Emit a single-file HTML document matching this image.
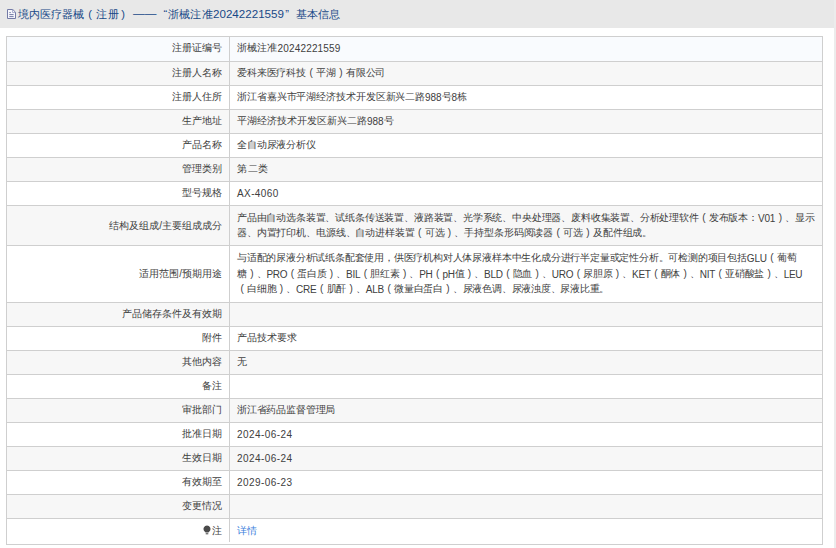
<!DOCTYPE html>
<html><head><meta charset="utf-8">
<style>
html,body{margin:0;padding:0;}
body{width:836px;height:548px;position:relative;overflow:hidden;background:#fff;font-family:"Liberation Sans",sans-serif;}
#hdr{position:absolute;left:0;top:0;width:834px;height:28px;background:#e8e8e8;}
#rstrip{position:absolute;left:834px;top:0;width:2px;height:548px;background:#ececec;}
.t{position:absolute;top:6px;font-size:11px;line-height:16px;color:#184887;white-space:nowrap;}
#ico{position:absolute;left:7px;top:9px;}
.row{position:absolute;left:6px;width:817px;}
.hl{position:absolute;left:6px;width:817px;height:1px;background:#cfcfcf;}
#vl{position:absolute;left:6px;top:36px;width:1px;height:509px;background:#cfcfcf;}
#vr{position:absolute;left:822px;top:36px;width:1px;height:509px;background:#cfcfcf;}
#vc{position:absolute;left:229px;top:36px;width:1px;height:506px;background:#cfcfcf;}
.lab{position:absolute;right:614px;font-size:10px;line-height:16px;color:#404040;white-space:nowrap;}
.val{position:absolute;left:237px;font-size:10px;line-height:16px;color:#404040;white-space:nowrap;}
.link{color:#3a80dc;}
i{font-style:normal;display:inline-block;width:10px;text-align:center;}
b.a{font-weight:normal;position:relative;top:1px;}
.bulb{vertical-align:-1px;margin-right:1px;}
</style></head><body>
<div id="hdr"></div>
<div id="rstrip"></div>
<svg id="ico" width="10" height="11" viewBox="0 0 10 11"><path d="M0.5 0.5H5.8L8.5 3.2V9.5H0.5Z" fill="#f6f6fb" stroke="#737aa6" stroke-width="1" stroke-linejoin="round"/><path d="M5.5 0.8V3.5H8.3" fill="none" stroke="#9aa0c4" stroke-width="0.8"/><path d="M2.3 3.6H3.8M2.3 5.6H6.6M2.3 7.6H6.6" stroke="#737aa6" stroke-width="1"/></svg>
<div class="t" id="h0" style="left:17.5px;letter-spacing:0.1px">境内医疗器械</div>
<div class="t" id="h1" style="left:85px;width:10px;text-align:center;font-size:11px">(</div>
<div class="t" id="h2" style="left:95.5px;letter-spacing:1px">注册</div>
<div class="t" id="h3" style="left:118px;width:10px;text-align:center;font-size:11px">)</div>
<div class="t" id="h4" style="left:133px;font-size:11.7px;top:5px">——</div>
<div class="t" id="h5" style="left:163.5px">“</div>
<div class="t" id="h6" style="left:167.5px;letter-spacing:0.4px">浙械注准</div>
<div class="t" id="h7" style="left:213px;font-size:11.6px">20242221559</div>
<div class="t" id="h8" style="left:285.3px">”</div>
<div class="t" id="h9" style="left:295.6px;letter-spacing:0.25px">基本信息</div>
<div class="row" style="top:36px;height:25px;background:#f9fbfe"></div>
<div class="hl" style="top:36px"></div>
<div class="lab" style="top:40.2px">注册证编号</div>
<div id="L0" class="val" style="top:40.2px;letter-spacing:0.150px">浙械注准<b class="a">20242221559</b></div>
<div class="row" style="top:61px;height:24px;background:#f7f7f7"></div>
<div class="hl" style="top:61px"></div>
<div class="lab" style="top:64.5px">注册人名称</div>
<div id="L1" class="val" style="top:64.5px;letter-spacing:-0.136px">爱科来医疗科技<i class="pl">(</i>平湖<i class="pr">)</i>有限公司</div>
<div class="row" style="top:85px;height:24px;background:#fff"></div>
<div class="hl" style="top:85px"></div>
<div class="lab" style="top:88.5px">注册人住所</div>
<div id="L2" class="val" style="top:88.5px;letter-spacing:-0.100px">浙江省嘉兴市平湖经济技术开发区新兴二路<b class="a">988</b>号<b class="a">8</b>栋</div>
<div class="row" style="top:109px;height:24px;background:#f7f7f7"></div>
<div class="hl" style="top:109px"></div>
<div class="lab" style="top:112.5px">生产地址</div>
<div id="L3" class="val" style="top:112.5px">平湖经济技术开发区新兴二路<b class="a">988</b>号</div>
<div class="row" style="top:133px;height:24px;background:#fff"></div>
<div class="hl" style="top:133px"></div>
<div class="lab" style="top:136.5px">产品名称</div>
<div id="L4" class="val" style="top:136.5px;letter-spacing:-0.143px">全自动尿液分析仪</div>
<div class="row" style="top:157px;height:24px;background:#f7f7f7"></div>
<div class="hl" style="top:157px"></div>
<div class="lab" style="top:160.5px">管理类别</div>
<div id="L5" class="val" style="top:160.5px;letter-spacing:0.600px">第二类</div>
<div class="row" style="top:181px;height:24px;background:#fff"></div>
<div class="hl" style="top:181px"></div>
<div class="lab" style="top:184.5px">型号规格</div>
<div id="L6" class="val" style="top:184.5px;letter-spacing:0.400px"><b class="a">AX-4060</b></div>
<div class="row" style="top:205px;height:40px;background:#f7f7f7"></div>
<div class="hl" style="top:205px"></div>
<div class="lab" style="top:217.6px">结构及组成/主要组成成分</div>
<div id="L7" class="val" style="top:209.8px;letter-spacing:-0.175px">产品由自动选条装置、试纸条传送装置、液路装置、光学系统、中央处理器、废料收集装置、分析处理软件<i class="pl">(</i>发布版本：<b class="a">V01</b><i class="pr">)</i>、显示</div>
<div id="L8" class="val" style="top:225.3px;letter-spacing:-0.127px">器、内置打印机、电源线、自动进样装置<i class="pl">(</i>可选<i class="pr">)</i>、手持型条形码阅读器<i class="pl">(</i>可选<i class="pr">)</i>及配件组成。</div>
<div class="row" style="top:245px;height:57px;background:#fff"></div>
<div class="hl" style="top:245px"></div>
<div class="lab" style="top:265.5px">适用范围/预期用途</div>
<div id="L9" class="val" style="top:250.0px;letter-spacing:-0.196px">与适配的尿液分析试纸条配套使用，供医疗机构对人体尿液样本中生化成分进行半定量或定性分析。可检测的项目包括<b class="a">GLU</b><i class="pl">(</i>葡萄</div>
<div id="L10" class="val" style="top:265.5px;letter-spacing:-0.288px">糖<i class="pr">)</i>、<b class="a">PRO</b><i class="pl">(</i>蛋白质<i class="pr">)</i>、<b class="a">BIL</b><i class="pl">(</i>胆红素<i class="pr">)</i>、<b class="a">PH</b><i class="pl">(</i><b class="a">pH</b>值<i class="pr">)</i>、<b class="a">BLD</b><i class="pl">(</i>隐血<i class="pr">)</i>、<b class="a">URO</b><i class="pl">(</i>尿胆原<i class="pr">)</i>、<b class="a">KET</b><i class="pl">(</i>酮体<i class="pr">)</i>、<b class="a">NIT</b><i class="pl">(</i>亚硝酸盐<i class="pr">)</i>、<b class="a">LEU</b></div>
<div id="L11" class="val" style="top:281.0px;letter-spacing:-0.231px"><i class="pl">(</i>白细胞<i class="pr">)</i>、<b class="a">CRE</b><i class="pl">(</i>肌酐<i class="pr">)</i>、<b class="a">ALB</b><i class="pl">(</i>微量白蛋白<i class="pr">)</i>、尿液色调、尿液浊度、尿液比重。</div>
<div class="row" style="top:302px;height:24px;background:#f7f7f7"></div>
<div class="hl" style="top:302px"></div>
<div class="lab" style="top:305.5px">产品储存条件及有效期</div>
<div class="row" style="top:326px;height:24px;background:#fff"></div>
<div class="hl" style="top:326px"></div>
<div class="lab" style="top:329.5px">附件</div>
<div id="L12" class="val" style="top:329.5px">产品技术要求</div>
<div class="row" style="top:350px;height:24px;background:#f7f7f7"></div>
<div class="hl" style="top:350px"></div>
<div class="lab" style="top:353.5px">其他内容</div>
<div id="L13" class="val" style="top:353.5px">无</div>
<div class="row" style="top:374px;height:24px;background:#fff"></div>
<div class="hl" style="top:374px"></div>
<div class="lab" style="top:377.5px">备注</div>
<div class="row" style="top:398px;height:24px;background:#f7f7f7"></div>
<div class="hl" style="top:398px"></div>
<div class="lab" style="top:401.5px">审批部门</div>
<div id="L14" class="val" style="top:401.5px;letter-spacing:-0.178px">浙江省药品监督管理局</div>
<div class="row" style="top:422px;height:24px;background:#fff"></div>
<div class="hl" style="top:422px"></div>
<div class="lab" style="top:425.5px">批准日期</div>
<div id="L15" class="val" style="top:425.5px;letter-spacing:0.422px"><b class="a">2024-06-24</b></div>
<div class="row" style="top:446px;height:24px;background:#f7f7f7"></div>
<div class="hl" style="top:446px"></div>
<div class="lab" style="top:449.5px">生效日期</div>
<div id="L16" class="val" style="top:449.5px;letter-spacing:0.422px"><b class="a">2024-06-24</b></div>
<div class="row" style="top:470px;height:24px;background:#fff"></div>
<div class="hl" style="top:470px"></div>
<div class="lab" style="top:473.5px">有效期至</div>
<div id="L17" class="val" style="top:473.5px;letter-spacing:0.422px"><b class="a">2029-06-23</b></div>
<div class="row" style="top:494px;height:24px;background:#f7f7f7"></div>
<div class="hl" style="top:494px"></div>
<div class="lab" style="top:497.5px">变更情况</div>
<div class="row" style="top:518px;height:26px;background:#fff"></div>
<div class="hl" style="top:518px"></div>
<div class="lab" style="top:522.5px"><svg class="bulb" width="8" height="10" viewBox="0 0 8 10"><path d="M4 0.4A3.5 3.5 0 0 1 6.6 6.2L5.4 7.6H2.6L1.4 6.2A3.5 3.5 0 0 1 4 0.4Z" fill="#4a4a4a"/><rect x="2.7" y="8" width="2.6" height="1.4" fill="#777"/></svg>注</div>
<div id="L18" class="val link" style="top:522.5px;letter-spacing:0.400px">详情</div>
<div class="hl" style="top:544px"></div>
<div id="vl"></div><div id="vr"></div><div id="vc"></div>
</body></html>
